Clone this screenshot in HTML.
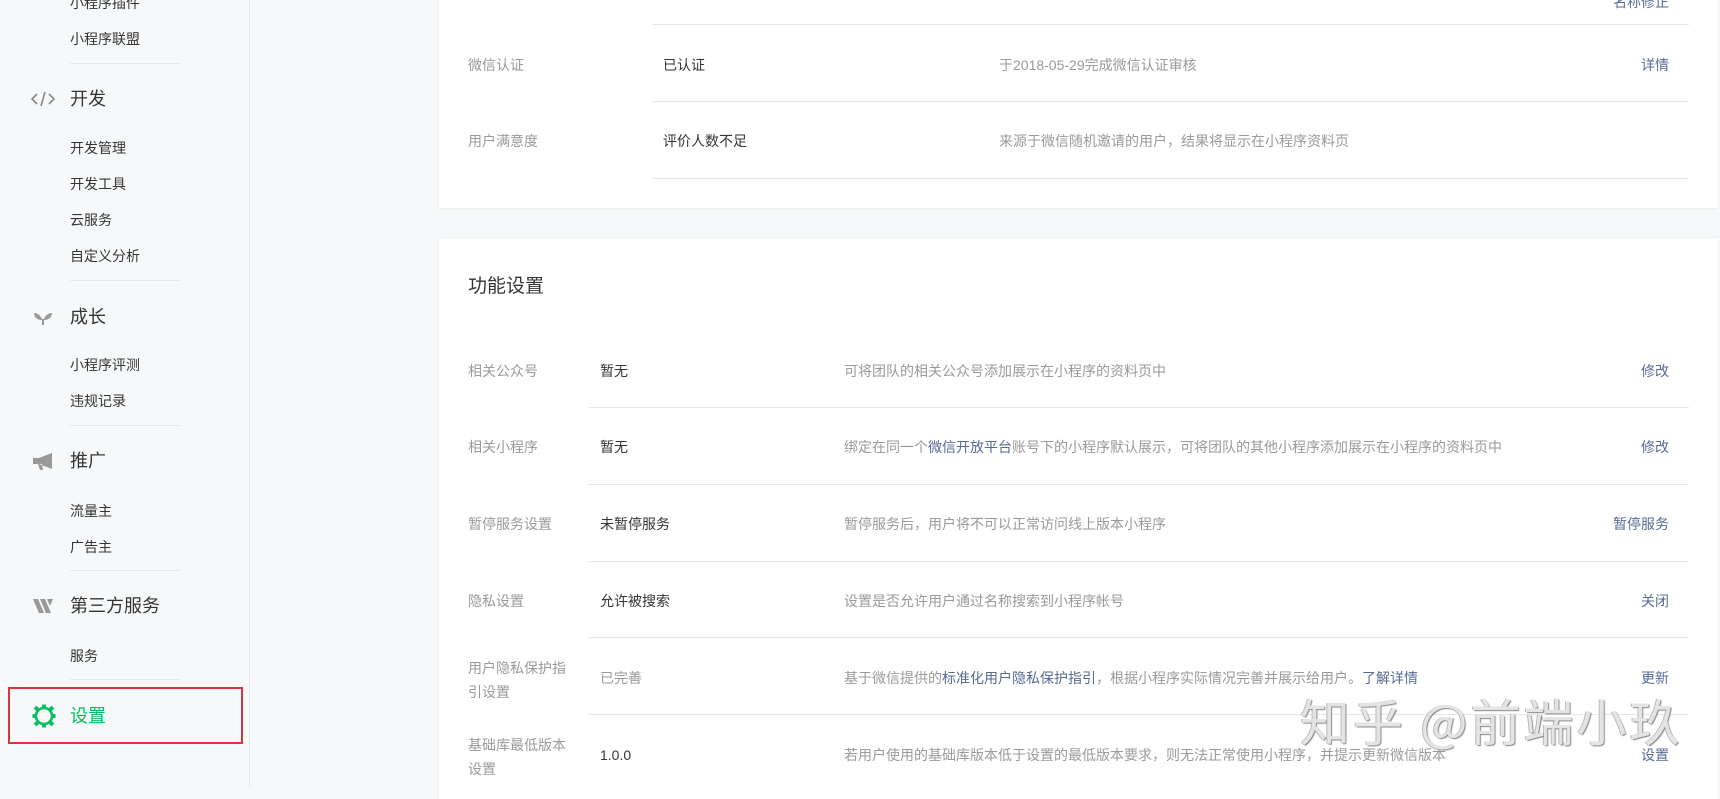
<!DOCTYPE html>
<html><head><meta charset="utf-8">
<style>
*{margin:0;padding:0;box-sizing:border-box}
body{width:1720px;height:787px;overflow:hidden;background:#f6f8f9;font-family:"Liberation Sans","Noto Sans CJK SC",sans-serif;font-size:14px;color:#353535;position:relative}
.side{position:absolute;left:0;top:0;width:250px;height:787px;background:#f6f8f9;border-right:1px solid #e7e7eb}
.side .s{position:absolute;left:70px;font-size:14px;color:#353535;line-height:20px;margin-top:2px}
.side .g{position:absolute;left:70px;font-size:18px;color:#353535;line-height:24px;margin-top:2px}
.side .d{position:absolute;left:70px;width:110px;height:1px;background:#e4e8eb}
.ic{position:absolute;left:30px;width:26px;height:24px;margin-top:2px}
.card{position:absolute;left:439px;width:1279px;background:#fff;box-shadow:0 1px 2px rgba(0,0,0,.06)}
.t{position:absolute;line-height:20px;white-space:nowrap;margin-top:2px}
.lb{color:#9a9a9a}
.ds{color:#9a9a9a}
.a{color:#576b95;right:0}
.hl{position:absolute;height:1px;background:#e7e7eb}
.wm{position:absolute;left:1300px;top:690px;font-size:50px;color:#e4e4e4;letter-spacing:3px;font-family:"Noto Sans CJK SC",sans-serif;line-height:60px;text-shadow:1px 1px 1px #888,-1px 0 0 #bbb}
</style></head><body>
<div class="side">
<div class="s" style="top:-9px">小程序插件</div>
<div class="s" style="top:27px">小程序联盟</div>
<div class="d" style="top:63px"></div>
<svg class="ic" style="top:85px" viewBox="0 0 26 24"><path d="M7 7 L2 12 L7 17 M19 7 L24 12 L19 17 M15 5 L11 19" stroke="#888" stroke-width="1.6" fill="none"/></svg>
<div class="g" style="top:85px">开发</div>
<div class="s" style="top:136px">开发管理</div>
<div class="s" style="top:172px">开发工具</div>
<div class="s" style="top:208px">云服务</div>
<div class="s" style="top:244px">自定义分析</div>
<div class="d" style="top:280px"></div>
<svg class="ic" style="top:303px" viewBox="0 0 26 24"><path d="M13 20 C13 14 10 8 4 8 C4 13 8 15 12 15 Z M13 20 C13 14 16 8 22 8 C22 13 18 15 14 15 Z" fill="#999"/><rect x="12" y="14" width="2" height="6" fill="#999"/></svg>
<div class="g" style="top:303px">成长</div>
<div class="s" style="top:353px">小程序评测</div>
<div class="s" style="top:389px">违规记录</div>
<div class="d" style="top:425px"></div>
<svg class="ic" style="top:447px" viewBox="0 0 26 24"><path d="M3 9 H9 L22 4 V20 L9 15 H3 Z M8 15 L10 21 H13 L12 15 Z" fill="#999"/></svg>
<div class="g" style="top:447px">推广</div>
<div class="s" style="top:499px">流量主</div>
<div class="s" style="top:535px">广告主</div>
<div class="d" style="top:570px"></div>
<svg class="ic" style="top:592px" viewBox="0 0 26 24"><path d="M3 5 H8 L14 19 H9 Z M10 5 H15 L21 19 H16 Z M17 5 H23 L20 12 Z" fill="#999"/></svg>
<div class="g" style="top:592px">第三方服务</div>
<div class="s" style="top:644px">服务</div>
<div class="d" style="top:679px"></div>
<div style="position:absolute;left:8px;top:687px;width:235px;height:57px;border:2px solid #d9353a"></div>
<svg class="ic" style="top:701px;left:31px;width:26px;height:26px" viewBox="0 0 26 26"><g fill="#07c160"><rect x="11" y="1.5" width="4" height="4"/><rect x="11" y="20.5" width="4" height="4"/><rect x="1.5" y="11" width="4" height="4"/><rect x="20.5" y="11" width="4" height="4"/><rect x="3.5" y="3.5" width="4" height="4" transform="rotate(45 5.5 5.5)"/><rect x="18.5" y="3.5" width="4" height="4" transform="rotate(45 20.5 5.5)"/><rect x="3.5" y="18.5" width="4" height="4" transform="rotate(45 5.5 20.5)"/><rect x="18.5" y="18.5" width="4" height="4" transform="rotate(45 20.5 20.5)"/></g><circle cx="13" cy="13" r="8" fill="none" stroke="#07c160" stroke-width="2.6"/></svg>
<div class="g" style="top:702px;color:#07c160">设置</div>
</div>

<div class="card" style="top:-10px;height:218px">
<div class="t a" style="top:0px;right:49px">名称修正</div>
<div class="hl" style="left:213px;width:1037px;top:34px"></div>
<div class="t lb" style="left:29px;top:63px">微信认证</div>
<div class="t" style="left:224px;top:63px">已认证</div>
<div class="t ds" style="left:560px;top:63px">于2018-05-29完成微信认证审核</div>
<div class="t a" style="right:49px;top:63px">详情</div>
<div class="hl" style="left:213px;width:1037px;top:111px"></div>
<div class="t lb" style="left:29px;top:139px">用户满意度</div>
<div class="t" style="left:224px;top:139px">评价人数不足</div>
<div class="t ds" style="left:560px;top:139px">来源于微信随机邀请的用户，结果将显示在小程序资料页</div>
<div class="hl" style="left:213px;width:1037px;top:188px"></div>
</div>

<div class="card" style="top:239px;height:560px">
<div class="t" style="left:29px;top:33px;font-size:19px;line-height:26px">功能设置</div>
<div class="t lb" style="left:29px;top:120px">相关公众号</div>
<div class="t" style="left:161px;top:120px">暂无</div>
<div class="t ds" style="left:405px;top:120px">可将团队的相关公众号添加展示在小程序的资料页中</div>
<div class="t a" style="right:49px;top:120px">修改</div>
<div class="hl" style="left:150px;width:1100px;top:168px"></div>
<div class="t lb" style="left:29px;top:196px">相关小程序</div>
<div class="t" style="left:161px;top:196px">暂无</div>
<div class="t ds" style="left:405px;top:196px">绑定在同一个<span style="color:#576b95">微信开放平台</span>账号下的小程序默认展示，可将团队的其他小程序添加展示在小程序的资料页中</div>
<div class="t a" style="right:49px;top:196px">修改</div>
<div class="hl" style="left:150px;width:1100px;top:245px"></div>
<div class="t lb" style="left:29px;top:273px">暂停服务设置</div>
<div class="t" style="left:161px;top:273px">未暂停服务</div>
<div class="t ds" style="left:405px;top:273px">暂停服务后，用户将不可以正常访问线上版本小程序</div>
<div class="t a" style="right:49px;top:273px">暂停服务</div>
<div class="hl" style="left:150px;width:1100px;top:322px"></div>
<div class="t lb" style="left:29px;top:350px">隐私设置</div>
<div class="t" style="left:161px;top:350px">允许被搜索</div>
<div class="t ds" style="left:405px;top:350px">设置是否允许用户通过名称搜索到小程序帐号</div>
<div class="t a" style="right:49px;top:350px">关闭</div>
<div class="hl" style="left:150px;width:1100px;top:398px"></div>
<div class="t lb" style="left:29px;top:415px;line-height:24px">用户隐私保护指<br>引设置</div>
<div class="t ds" style="left:161px;top:427px">已完善</div>
<div class="t ds" style="left:405px;top:427px">基于微信提供的<span style="color:#576b95">标准化用户隐私保护指引</span>，根据小程序实际情况完善并展示给用户。<span style="color:#576b95">了解详情</span></div>
<div class="t a" style="right:49px;top:427px">更新</div>
<div class="hl" style="left:150px;width:1100px;top:475px"></div>
<div class="t lb" style="left:29px;top:492px;line-height:24px">基础库最低版本<br>设置</div>
<div class="t" style="left:161px;top:504px">1.0.0</div>
<div class="t ds" style="left:405px;top:504px">若用户使用的基础库版本低于设置的最低版本要求，则无法正常使用小程序，并提示更新微信版本</div>
<div class="t a" style="right:49px;top:504px">设置</div>
</div>
<div class="wm">知乎 @前端小玖</div>
</body></html>
